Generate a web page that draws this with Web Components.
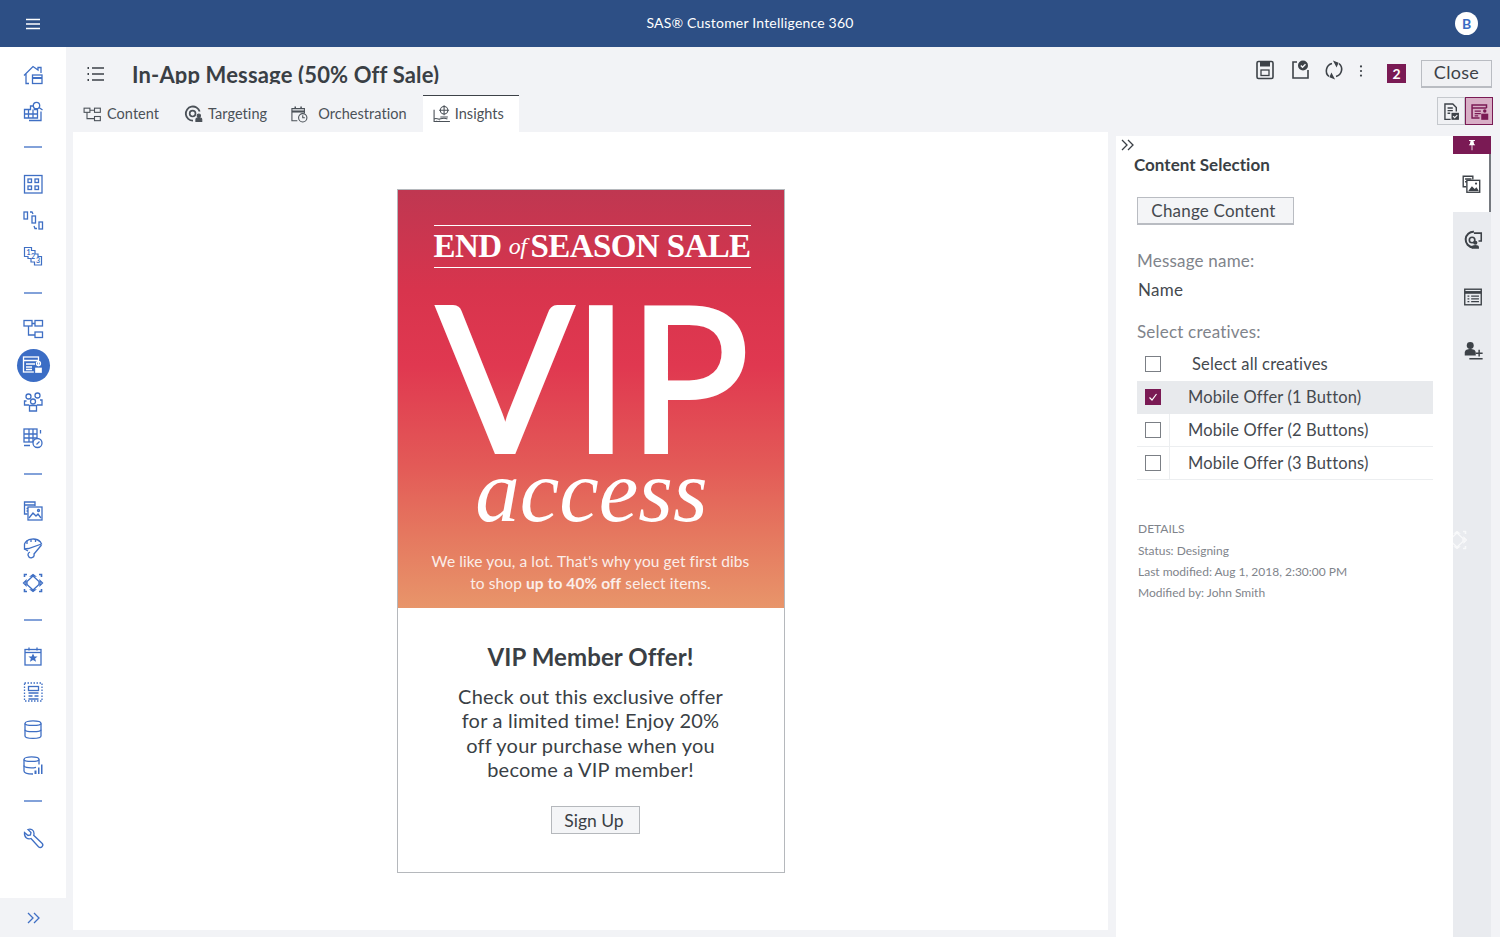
<!DOCTYPE html>
<html lang="en">
<head>
<meta charset="utf-8">
<title>SAS Customer Intelligence 360</title>
<style>
  html, body { margin: 0; height: 100%; }
  body { font-family: Lato, "Liberation Sans", sans-serif; background: #f2f3f6; overflow: hidden; }
</style>
</head>
<body>
<ci-app></ci-app>
<script>
const ICONS = {
  menu: '<path d="M5 7.5h14M5 12h14M5 16.5h14"/>',
  home: '<path d="M3 12.5 12 3.5l5 3.5V4.5h3v5.5M5 11v9.5h3"/><rect x="11.5" y="12" width="9.5" height="8.5"/><path d="M11.5 15h9.5" stroke-width="2"/>',
  build: '<path d="M3.5 10.5h6V7h4v3.5h3V19h-13zM3.5 15h13M7.5 10.5V19M12 10.5V19"/><circle cx="15.5" cy="6.5" r="3.2" fill="#fff"/><path d="M18 8.5l3.5 2.5M20 12.5v9h-12"/>',
  dash: '<path d="M3 12h18"/>',
  grid: '<rect x="3.5" y="3.5" width="17.5" height="17.5"/><rect x="7" y="7" width="3.5" height="3.5"/><rect x="14" y="7" width="3.5" height="3.5"/><rect x="7" y="14" width="3.5" height="3.5"/><rect x="14" y="14" width="3.5" height="3.5"/>',
  flow: '<rect x="3" y="4" width="3.5" height="7"/><rect x="11" y="8" width="3.5" height="7"/><rect x="18" y="14" width="3.5" height="7"/><path d="M9 4h2l1 2M13 18l1 2.5h2"/>',
  nums: '<path d="M3.5 3.5h7v3h3.5V10h3v2.5h3.5V21h-7v-3h-3.5v-3.5h-3v-2H3.5z" stroke-width="1.2"/><g fill="currentColor" stroke="none" font-family="Lato, sans-serif" font-size="7" font-weight="700"><text x="5.5" y="10.5">1</text><text x="10" y="14.5">2</text><text x="15" y="19">3</text></g>',
  tree: '<rect x="3" y="3.5" width="8" height="5.5"/><rect x="14" y="3.5" width="7.5" height="5.5"/><rect x="14" y="15" width="7.5" height="5.5"/><path d="M11 6.5h3M7.5 9v9h6.5"/>',
  msg: '<rect x="2.5" y="4" width="15" height="15" stroke="#fff"/><path d="M2.5 7.5h15M5 11h9M5 14h6M5 16.5h6" stroke="#fff"/><circle cx="17.5" cy="10.5" r="2" stroke="#fff"/><rect x="13.5" y="14" width="8" height="6.5" fill="#fff" stroke="#3b6dc5"/>',
  people: '<circle cx="7.5" cy="6.5" r="2.5"/><circle cx="16.5" cy="5.5" r="2.5"/><circle cx="12" cy="11.5" r="2.5"/><path d="M8 15H3.5v-4h2M16 15h5v-5h-2M8.5 21v-5.5h7V21z"/>',
  tabgauge: '<rect x="3" y="3" width="13" height="13"/><path d="M3 8h13M3 12h13M8 3v13M12 3v13"/><path d="M19.5 4v3.5M3 19.5h6"/><circle cx="16.5" cy="17" r="4.5" fill="#fff"/><path d="M15.5 18.5l3-3"/>',
  imgdoc: '<path d="M14 7V3H3.5v12h3"/><path d="M3.5 6H14M5.5 9.5h5M5.5 12h3"/><rect x="7" y="8" width="14" height="13" fill="#fff"/><path d="M8 19l4-5 3 3 2-2 3 4"/><circle cx="17.5" cy="11.5" r="1"/>',
  proto: '<path d="M3.5 14V9a9 7 0 0 1 16-2l1 2-13 4.5z"/><path d="M6 5.5V9M10 4v3M14.5 4v3"/><path d="M3.5 14 7 16M20.5 10 13 19a3 3 0 1 1-4-2"/>',
  diamond: '<path d="M12 5 18 10.5v3L12 19l-6-5.5v-3z"/><path d="M2.5 12 5 9.5v5zM21.5 12 19 9.5v5zM12 3.5l2 1.5h-4zM12 20.500l2-1.500h-4z"/><path d="M3.5 6V3.5H6M18 3.5h2.5V6M3.5 18v2.5H6M20.5 18v2.5H18" stroke-width="1.6"/>',
  calstar: '<rect x="4" y="5.5" width="16" height="15.5"/><path d="M4 8.5h16"/><path d="M8 3.5v3M16 3.5v3"/><path d="M12 9.5l1.4 3h3.2l-2.5 2 1 3.3L12 16l-3.1 1.8 1-3.300-2.500-2h3.200z" fill="#3f6fc4" stroke="none"/>',
  dotted: '<rect x="3.5" y="3" width="17.5" height="18" stroke-dasharray="1.5 1.5"/><rect x="7.5" y="6.5" width="10" height="4"/><path d="M7.5 13h10M7.5 16h4M13.5 16h4M7.5 19h10"/>',
  db: '<path d="M4 6.5c0-3.5 16-3.5 16 0V19c0 3.2-16 3.2-16 0z"/><path d="M4 6.5c0 2.6 16 2.6 16 0M4 12.7c0 2.6 16 2.6 16 0"/>',
  dbchart: '<path d="M3 6.5c0-3.5 15-3.5 15 0v5M3 6.5V18c0 2.5 6 3 9 3"/><path d="M3 6.5c0 2.6 15 2.6 15 0M3 12.5c0 2.4 8 2.8 12 1.8"/><path d="M13.5 17.5h2V21h-2zM17 14.5h1.5V21H17zM20 11.5h1.5V21H20z" fill="#3f6fc4" stroke="none"/>',
  wrench: '<path d="M3.5 6.5 7 9.5l2.5-.5.5-2.5-3-3c3-1 6 .5 6 4 0 .8 0 1.3-.3 1.8l8.3 8a2.3 2.3 0 0 1-3.500 3.500L10 12.500c-3 1-7-.5-6.500-6z"/>',
  chev: '<path d="M7 7l5 5-5 5M13 7l5 5-5 5"/>',
  list: '<path d="M8 6h12M8 12h12M8 18h12"/><path d="M3.5 6H5M3.5 12H5M3.5 18H5" stroke-width="2"/>',
  tContent: '<rect x="2.5" y="5" width="7" height="5"/><rect x="15" y="5" width="7" height="5"/><rect x="15" y="15" width="7" height="5"/><path d="M9.5 7.5H15M6 10v7.5h9"/>',
  tTarget: '<path d="M12 20a8.5 8.5 0 1 1 8-11" stroke-width="2.2"/><circle cx="11.5" cy="11.5" r="3.5" stroke-width="2"/><circle cx="19" cy="14" r="2" fill="currentColor"/><path d="M15.5 21v-2.5a3.5 2 0 0 1 7 0V21z" fill="currentColor"/>',
  tOrch: '<path d="M10 20H3.5V5.5h15V11"/><path d="M3.5 9h15" stroke-width="2.5"/><path d="M7.5 3v3M14.5 3v3" stroke-width="1.8"/><circle cx="16.5" cy="16.5" r="5"/><path d="M16.5 13.5v3H19"/>',
  tInsight: '<path d="M2.5 7v14h19"/><path d="M2.5 18c3-2 4 1 7 0s5-2 9 0"/><path d="M5.5 21v-1M9 21v-1"/><circle cx="14.5" cy="7.5" r="4.5"/><path d="M14.5 1.5v12M8.5 7.5h12M10 15.5h9"/>',
  save: '<rect x="4" y="3.5" width="16" height="17" rx="1.5" stroke-width="1.6"/><rect x="7" y="3.5" width="10" height="5" fill="currentColor" stroke="none"/><rect x="8" y="12" width="8" height="5.5"/>',
  saved: '<path d="M9 4H5v16h15v-8" stroke-width="1.6"/><circle cx="15" cy="7.5" r="5" fill="currentColor" stroke="none"/><path d="M12.8 7.5l1.7 1.7 3-3" stroke="#f2f3f6" stroke-width="1.5"/>',
  sync: '<path d="M10 5.5a7.5 7.5 0 0 0-3 13" stroke-width="1.6"/><path d="M14 18.5a7.5 7.5 0 0 0 3-13" stroke-width="1.6"/><path d="M9 3l6 1-1 5zM15 21l-6-1 1-5z" fill="currentColor" stroke="none" transform="rotate(12 12 12)"/>',
  dots: '<circle cx="12" cy="6.5" r="1.3" fill="currentColor" stroke="none"/><circle cx="12" cy="12" r="1.3" fill="currentColor" stroke="none"/><circle cx="12" cy="17.5" r="1.3" fill="currentColor" stroke="none"/>',
  report: '<path d="M11 21H4.5V3.5h9l4 4V12" stroke-width="1.6"/><path d="M7.5 8h6M7.5 11h6M7.5 14h3" stroke-width="1.5"/><rect x="12" y="13.5" width="8.5" height="8" fill="currentColor" stroke="none"/><path d="M13.8 17.3l1.8 1.8 3-3" stroke="#f0f1f4" stroke-width="1.3"/>',
  msgbox: '<path d="M20 8V4.5H3.5v15H12" stroke-width="1.7"/><path d="M3.5 8H20M6.5 11.5h7M6.5 14.5h7M6.5 17h4" stroke-width="1.5"/><circle cx="18" cy="11.5" r="2" fill="currentColor" stroke="none"/><rect x="14" y="14.5" width="8" height="7" fill="currentColor" stroke="none"/>',
  pin: '<path d="M7 3.5h10V5H7zM9.5 5h5l1 5 2 2.5h-11l2-2.5zM11.3 12.5h1.4V21h-1.4z" fill="#fff" stroke="none"/>',
  sImg: '<path d="M14 7V3.5H3.5V15H7" stroke-width="1.5"/><path d="M5.5 6.5h7M5.5 9.5h3" stroke-width="1.5"/><rect x="7.5" y="8" width="14" height="13" fill="#fff" stroke-width="1.5"/><path d="M9 19.5l4-5 3 3 2-2 2.5 4z" fill="currentColor" stroke="none"/><circle cx="17.5" cy="11.5" r="1.2" fill="currentColor" stroke="none"/>',
  sTarget: '<path d="M12 20a8.5 8.5 0 1 1 1-17" stroke-width="2.2"/><circle cx="11" cy="12" r="3" stroke-width="1.8"/><path d="M13 4.5h8V13h-3" stroke-width="1.7"/><circle cx="14.5" cy="15" r="2.3" fill="currentColor" stroke="none"/><path d="M10.500 21.500V20a4 2.500 0 0 1 8 0v1.500z" fill="currentColor" stroke="none"/>',
  sList: '<rect x="3" y="3.5" width="18" height="17" stroke-width="1.5"/><path d="M3 7h18" stroke-width="3"/><path d="M6 11h2M10 11h8.5M6 14h2M10 14h8.5M6 17h2M10 17h8.5" stroke-width="1.4"/>',
  sAdd: '<circle cx="9" cy="7" r="3.8" fill="currentColor" stroke="none"/><path d="M3 18v-3c0-3 3-4 6-4s6 1 6 4v3z" fill="currentColor" stroke="none"/><path d="M15 15.500h7.500M18.700 11.800v7.400M8 21.500h14.500" stroke-width="1.6"/>'
};

class CiIcon extends HTMLElement {
  connectedCallback() {
    const size = this.getAttribute("size") || 24;
    const width = this.getAttribute("stroke") || 1.3;
    this.attachShadow({ mode: "open" }).innerHTML = `
      <style>
        :host { display: inline-flex; flex: none; line-height: 0; }
      </style>
      <svg width="${size}" height="${size}" viewBox="0 0 24 24" fill="none" stroke="currentColor" stroke-width="${width}">${ICONS[this.getAttribute("name")]}</svg>`;
  }
}
customElements.define("ci-icon", CiIcon);

class CiTopbar extends HTMLElement {
  constructor() {
    super();
    this.attachShadow({ mode: "open" }).innerHTML = `
      <style>
        :host { display: flex; align-items: center; justify-content: space-between; height: 47px; background: #2d4f85; color: #fff; padding: 0 22px 0 21px; font-size: 14px; }
        .name { letter-spacing: .2px; padding-bottom: 2px; }
        .avatar { width: 23px; height: 23px; border-radius: 50%; background: #fff; color: #3a6cc4; font-weight: 700; font-size: 14px; display: flex; align-items: center; justify-content: center; }
      </style>
      <ci-icon name="menu" size="24"></ci-icon>
      <span class="name">SAS® Customer Intelligence 360</span>
      <span class="avatar">B</span>`;
  }
}
customElements.define("ci-topbar", CiTopbar);

class CiRail extends HTMLElement {
  constructor() {
    super();
    const names = ["home", "build", "dash", "grid", "flow", "nums", "dash", "tree", "msg", "people", "tabgauge", "dash", "imgdoc", "proto", "diamond", "dash", "calstar", "dotted", "db", "dbchart", "dash", "wrench"];
    const items = names.map(n => n === "msg"
      ? `<div class="item"><span class="on"><ci-icon name="msg"></ci-icon></span></div>`
      : `<div class="item"><ci-icon name="${n}"></ci-icon></div>`).join("");
    this.attachShadow({ mode: "open" }).innerHTML = `
      <style>
        :host { display: flex; flex-direction: column; width: 66px; flex: none; background: #fff; color: #3f6fc4; }
        .items { flex: 1; padding-top: 9.5px; }
        .item { height: 36.33px; display: flex; align-items: center; justify-content: center; }
        .on { width: 33px; height: 33px; border-radius: 50%; background: #3b6dc5; display: flex; align-items: center; justify-content: center; }
        .foot { height: 39px; background: #f2f3f6; display: flex; align-items: center; justify-content: center; }
      </style>
      <div class="items">${items}</div>
      <div class="foot"><ci-icon name="chev" size="24"></ci-icon></div>`;
  }
}
customElements.define("ci-rail", CiRail);

class CiTab extends HTMLElement {
  constructor() {
    super();
    this.attachShadow({ mode: "open" }).innerHTML = `
      <style>
        :host { display: flex; align-items: center; gap: var(--tab-gap, 5px); height: 36px; font-size: 14.5px; color: #4b5158; letter-spacing: .05px; border-top: 1px solid transparent; }
        :host([active]) { background: #fff; border-top-color: #3d4248; padding: 0 15px 0 9px; }
        span { padding-bottom: 2px; }
      </style>
      <ci-icon name="${this.getAttribute("icon")}" size="20" stroke="1.3"></ci-icon>
      <span><slot></slot></span>`;
  }
}
customElements.define("ci-tab", CiTab);

class CiHeader extends HTMLElement {
  constructor() {
    super();
    this.attachShadow({ mode: "open" }).innerHTML = `
      <style>
        :host { display: block; height: 85px; flex: none; color: #3d4248; }
        .top { display: flex; align-items: flex-start; height: 48px; }
        .list { margin: 15px 0 0 18px; }
        .titlewrap { height: 37px; overflow: hidden; margin-left: 24px; flex: 1; }
        h1 { margin: 13px 0 0; font-size: 22px; line-height: 30px; font-weight: 700; letter-spacing: .15px; color: #3a3f45; }
        .tools { display: flex; align-items: flex-start; color: #3d4248; padding: 13px 8px 0 0; }
        .tools ci-icon { margin-top: -2px; }
        .t1 { margin-right: 11px; } .t2 { margin-right: 10px; } .t3 { margin-right: 5px; } .tools .t4 { margin: 1px 16px 0 0; }
        .badge { width: 19px; height: 19px; margin: 4px 15px 0 0; background: #7a1a54; color: #fff; font-size: 14px; font-weight: 700; display: flex; align-items: center; justify-content: center; }
        .close { width: 71px; height: 28px; margin: 0; box-sizing: border-box; border: 1px solid #b9bcc2; border-bottom-width: 2px; background: #f0f1f4; font: 18px Lato, sans-serif; letter-spacing: .3px; color: #3d4248; padding: 0 0 3px; }
        .tabs { display: flex; align-items: flex-end; padding-left: 16px; }
        .gap1 { margin-left: 24px; }
        .gap2 { margin-left: 22px; --tab-gap: 9px; }
        .gap3 { margin-left: 16px; --tab-gap: 3px; }
        .views { margin: 2px 7px 0 auto; display: flex; align-self: flex-start; }
        .view { width: 28px; height: 28px; box-sizing: border-box; border: 1px solid #c5c8cd; background: #f0f1f4; display: flex; align-items: center; justify-content: center; color: #3d4248; }
        .view.sel { background: #d8afc6; border-color: #7a1a54; color: #7a1a54; }
      </style>
      <div class="top">
        <ci-icon class="list" name="list" size="24"></ci-icon>
        <div class="titlewrap"><h1>In-App Message (50% Off Sale)</h1></div>
        <div class="tools">
          <ci-icon class="t1" name="save" size="24"></ci-icon>
          <ci-icon class="t2" name="saved" size="24"></ci-icon>
          <ci-icon class="t3" name="sync" size="24"></ci-icon>
          <ci-icon class="t4" name="dots" size="20"></ci-icon>
          <span class="badge">2</span>
          <button class="close">Close</button>
        </div>
      </div>
      <div class="tabs">
        <ci-tab icon="tContent">Content</ci-tab>
        <ci-tab class="gap1" icon="tTarget">Targeting</ci-tab>
        <ci-tab class="gap2" icon="tOrch">Orchestration</ci-tab>
        <ci-tab class="gap3" icon="tInsight" active>Insights</ci-tab>
        <div class="views">
          <span class="view"><ci-icon name="report" size="21"></ci-icon></span>
          <span class="view sel"><ci-icon name="msgbox" size="21"></ci-icon></span>
        </div>
      </div>`;
  }
}
customElements.define("ci-header", CiHeader);

class CiPreview extends HTMLElement {
  constructor() {
    super();
    this.attachShadow({ mode: "open" }).innerHTML = `
      <style>
        :host { display: block; width: 388px; height: 684px; box-sizing: border-box; border: 1px solid #b5b8bc; background: #fff; flex: none; }
        .banner { height: 418px; box-sizing: border-box; padding-top: 35px; color: #fff; text-align: center;
          background: linear-gradient(#bf3751 0, #d8344d 24%, #e03850 42%, #e35a57 66%, #e5775f 82%, #e8956a 100%); }
        .head { width: 317px; margin: 0 33px 0 36px; border-top: 1.5px solid #fff; border-bottom: 1.5px solid #fff; height: 43px; box-sizing: border-box; font: 700 33px/41px "Liberation Serif", serif; letter-spacing: -.6px; white-space: nowrap; display: flex; justify-content: space-between; }
        .head i { font-weight: 400; font-size: 24px; line-height: 41px; margin-left: 3px; }
        .vip { font: 400 202px/150px Lato, sans-serif; -webkit-text-stroke: 4px #fff; margin-top: 31px; padding-left: 4px; height: 148px; letter-spacing: -1px; white-space: nowrap; }
        .access { font: italic 400 89px/70px "Liberation Serif", serif; margin-top: 9px; padding-left: 2px; }
        .sub { font-size: 15.5px; line-height: 22px; margin-top: 24px; color: #fbeee9; letter-spacing: .1px; }
        .body { text-align: center; color: #3a3f45; }
        h2 { margin: 0; padding-top: 34px; font-size: 24px; line-height: 30px; font-weight: 700; letter-spacing: .1px; }
        p { margin: 11.5px 0 0; font-size: 20px; line-height: 24.5px; letter-spacing: .2px; }
        button { display: block; margin: 24.5px 0 0 153px; width: 89px; height: 28px; background: #f4f5f7; border: 1px solid #b5b8bc; font: 17.5px Lato, sans-serif; color: #3a3f45; padding: 0 2px 0 0; }
      </style>
      <div class="banner">
        <div class="head"><span>END</span><i>of</i><span>SEASON SALE</span></div>
        <div class="vip">VIP</div>
        <div class="access">access</div>
        <div class="sub">We like you, a lot. That's why you get first dibs<br>to shop <b>up to 40% off</b> select items.</div>
      </div>
      <div class="body">
        <h2>VIP Member Offer!</h2>
        <p>Check out this exclusive offer<br>for a limited time! Enjoy 20%<br>off your purchase when you<br>become a VIP member!</p>
        <button>Sign Up</button>
      </div>`;
  }
}
customElements.define("ci-preview", CiPreview);

class CiRow extends HTMLElement {
  constructor() {
    super();
    this.attachShadow({ mode: "open" }).innerHTML = `
      <style>
        :host { display: flex; height: 33px; box-sizing: border-box; border-bottom: 1px solid #eceef0; align-items: stretch; font-size: 16.5px; color: #45494f; letter-spacing: .15px; }
        :host([checked]) { background: #e8eaed; border-bottom-color: #e8eaed; }
        :host([plain]) { border: 0; height: 34px; }
        .cell { width: 32px; flex: none; display: flex; align-items: center; justify-content: center; border-right: 1px solid #eceef0; }
        :host([checked]) .cell, :host([plain]) .cell { border-color: transparent; }
        .box { width: 16px; height: 16px; box-sizing: border-box; border: 1px solid #7b7f85; background: #fff; display: flex; align-items: center; justify-content: center; }
        :host([checked]) .box { background: #7a1a54; border-color: #7a1a54; }
        .label { padding-left: 18px; display: flex; align-items: center; }
        :host([plain]) .label { padding-left: 22px; }
      </style>
      <div class="cell"><span class="box">${this.hasAttribute("checked") ? '<svg width="12" height="12" viewBox="0 0 12 12" fill="none" stroke="#fff" stroke-width="1.2"><path d="M2.5 6.5 5 9l4.5-6"/></svg>' : ""}</span></div>
      <div class="label"><slot></slot></div>`;
  }
}
customElements.define("ci-row", CiRow);

class CiPanel extends HTMLElement {
  constructor() {
    super();
    this.attachShadow({ mode: "open" }).innerHTML = `
      <style>
        :host { display: block; width: 337px; flex: none; background: #fff; box-sizing: border-box; padding: 0 20px 0 21px; color: #45494f; }
        .chev { margin: -3px 0 0 -22px; color: #3a3f45; display: block; height: 24px; }
        h3 { margin: -3px 0 0 -3px; font-size: 17px; line-height: 22px; font-weight: 700; color: #3a3f45; letter-spacing: .02px; }
        button { display: block; margin-top: 21px; width: 157px; height: 28px; box-sizing: border-box; background: #f4f5f7; border: 1px solid #b9bcc2; border-bottom-width: 2px; font: 17px Lato, sans-serif; letter-spacing: .2px; color: #45494f; padding: 0 4px 1px 0; }
        .lab { font-size: 17px; line-height: 22px; color: #7f848b; letter-spacing: .2px; }
        .m1 { margin-top: 25px; }
        .name { font-size: 17px; line-height: 22px; margin: 7px 0 0 1px; letter-spacing: .3px; }
        .m2 { margin-top: 20px; }
        .rows { margin-top: 4px; }
        .dets { margin: 41px 0 0 1px; font-size: 12px; color: #7f848b; }
        .dets div:first-child { line-height: 16px; margin-bottom: 3px; }
        .dets div + div { line-height: 21px; }
      </style>
      <ci-icon class="chev" name="chev" size="24"></ci-icon>
      <h3>Content Selection</h3>
      <button>Change Content</button>
      <div class="lab m1">Message name:</div>
      <div class="name">Name</div>
      <div class="lab m2">Select creatives:</div>
      <div class="rows">
        <ci-row plain>Select all creatives</ci-row>
        <ci-row checked>Mobile Offer (1 Button)</ci-row>
        <ci-row>Mobile Offer (2 Buttons)</ci-row>
        <ci-row>Mobile Offer (3 Buttons)</ci-row>
      </div>
      <div class="dets">
        <div>DETAILS</div>
        <div>Status: Designing</div>
        <div>Last modified: Aug 1, 2018, 2:30:00 PM</div>
        <div>Modified by: John Smith</div>
      </div>`;
  }
}
customElements.define("ci-panel", CiPanel);

class CiSideRail extends HTMLElement {
  constructor() {
    super();
    this.attachShadow({ mode: "open" }).innerHTML = `
      <style>
        :host { display: flex; flex-direction: column; width: 38px; flex: none; background: #e9ebef; color: #3d4248; position: relative; }
        .pin { height: 18px; background: #7a1a54; display: flex; align-items: center; justify-content: center; }
        .sel { height: 58px; background: #fff; border-right: 2px solid #75797f; box-sizing: border-box; display: flex; align-items: center; justify-content: center; padding-top: 2px; }
        .it { display: flex; align-items: center; justify-content: center; padding-left: 1px; }
        .ghost { position: absolute; left: -8px; top: 392px; color: #fff; opacity: .7; }
      </style>
      <div class="pin"><ci-icon name="pin" size="14"></ci-icon></div>
      <div class="sel"><ci-icon name="sImg" size="22"></ci-icon></div>
      <div class="it" style="height:56px"><ci-icon name="sTarget" size="22"></ci-icon></div>
      <div class="it" style="height:58px"><ci-icon name="sList" size="22"></ci-icon></div>
      <div class="it" style="height:47px"><ci-icon name="sAdd" size="22"></ci-icon></div>
      <ci-icon class="ghost" name="diamond" size="24"></ci-icon>`;
  }
}
customElements.define("ci-side-rail", CiSideRail);

class CiApp extends HTMLElement {
  constructor() {
    super();
    this.attachShadow({ mode: "open" }).innerHTML = `
      <style>
        :host { display: flex; flex-direction: column; height: 937px; width: 1500px; overflow: hidden; }
        .below { flex: 1; display: flex; min-height: 0; }
        .main { flex: 1; display: flex; flex-direction: column; min-width: 0; }
        .work { flex: 1; display: flex; min-height: 0; }
        .canvas { width: 1035px; height: 798px; margin-left: 7px; background: #fff; display: flex; justify-content: center; padding-top: 57px; box-sizing: border-box; flex: none; }
        .right { display: flex; margin: 4px 0 0 8px; flex: none; }
      </style>
      <ci-topbar></ci-topbar>
      <div class="below">
        <ci-rail></ci-rail>
        <div class="main">
          <ci-header></ci-header>
          <div class="work">
            <div class="canvas"><ci-preview></ci-preview></div>
            <div class="right"><ci-panel></ci-panel><ci-side-rail></ci-side-rail></div>
          </div>
        </div>
      </div>`;
  }
}
customElements.define("ci-app", CiApp);
</script>
</body>
</html>
